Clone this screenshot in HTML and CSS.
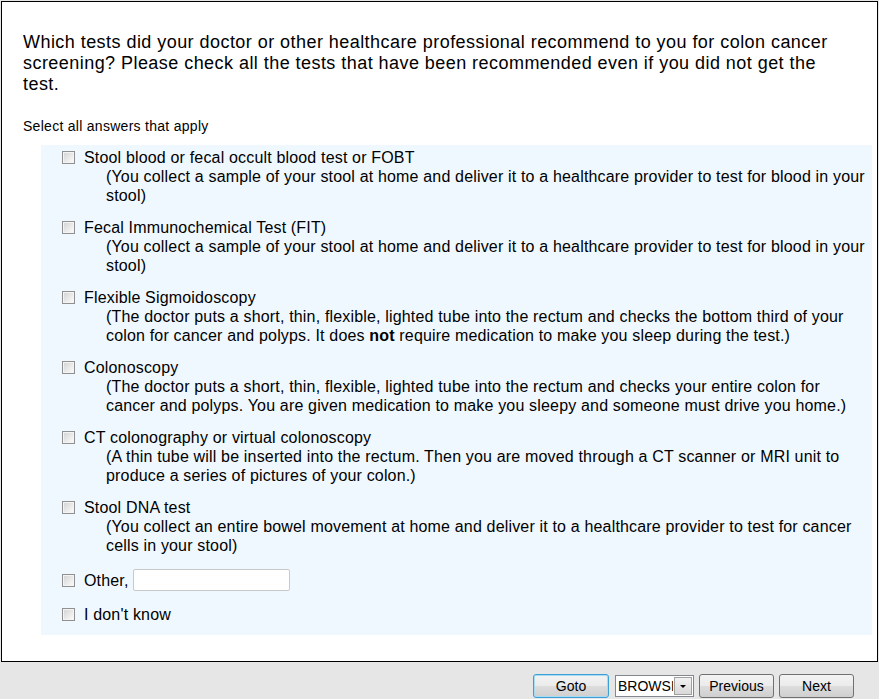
FILE: index.html
```html
<!DOCTYPE html>
<html lang="en">
<head>
    <meta charset="UTF-8">
    <title>Colon Cancer Screening Survey</title>
    <link rel="stylesheet" href="styles.css">
</head>
<body>
    <div class="survey">
        <div class="question">
            Which tests did your doctor or other healthcare professional recommend to you for colon cancer screening? Please check all the tests that have been recommended even if you did not get the test.
        </div>
        <div class="instructions">Select all answers that apply</div>
        <div class="answers">
            <label class="answer">
                <input type="checkbox" class="check">
                <span class="answer-text">
                    <span class="title">Stool blood or fecal occult blood test or FOBT</span>
                    <span class="desc">(You collect a sample of your stool at home and deliver it to a healthcare provider to test for blood in your stool)</span>
                </span>
            </label>
            <label class="answer">
                <input type="checkbox" class="check">
                <span class="answer-text">
                    <span class="title">Fecal Immunochemical Test (FIT)</span>
                    <span class="desc">(You collect a sample of your stool at home and deliver it to a healthcare provider to test for blood in your stool)</span>
                </span>
            </label>
            <label class="answer">
                <input type="checkbox" class="check">
                <span class="answer-text">
                    <span class="title">Flexible Sigmoidoscopy</span>
                    <span class="desc">(The doctor puts a short, thin, flexible, lighted tube into the rectum and checks the bottom third of your colon for cancer and polyps. It does <strong class="emph">not</strong> require medication to make you sleep during the test.)</span>
                </span>
            </label>
            <label class="answer">
                <input type="checkbox" class="check">
                <span class="answer-text">
                    <span class="title">Colonoscopy</span>
                    <span class="desc">(The doctor puts a short, thin, flexible, lighted tube into the rectum and checks your entire colon for cancer and polyps. You are given medication to make you sleepy and someone must drive you home.)</span>
                </span>
            </label>
            <label class="answer">
                <input type="checkbox" class="check">
                <span class="answer-text">
                    <span class="title">CT colonography or virtual colonoscopy</span>
                    <span class="desc">(A thin tube will be inserted into the rectum. Then you are moved through a CT scanner or MRI unit to produce a series of pictures of your colon.)</span>
                </span>
            </label>
            <label class="answer">
                <input type="checkbox" class="check">
                <span class="answer-text">
                    <span class="title">Stool DNA test</span>
                    <span class="desc">(You collect an entire bowel movement at home and deliver it to a healthcare provider to test for cancer cells in your stool)</span>
                </span>
            </label>
            <label class="answer answer-other">
                <input type="checkbox" class="check">
                <span class="title">Other,</span>
                <input type="text" class="other-input">
            </label>
            <label class="answer">
                <input type="checkbox" class="check">
                <span class="title">I don't know</span>
            </label>
        </div>
    </div>

    <div class="nav-bar">
        <button class="nav-button goto">Goto</button>
        <div class="jump">
            <select class="jump-select">
                <option>BROWSE</option>
            </select>
            <span class="jump-arrow"></span>
        </div>
        <button class="nav-button">Previous</button>
        <button class="nav-button">Next</button>
    </div>
</body>
</html>
```

FILE: styles.css
```css
body {
    margin: 0;
    background-color: #e6e6e6;
    font-family: "Liberation Sans", Arial, sans-serif;
    color: #000;
}

.survey {
    margin: 1px 0 0 1px;
    width: 875px;
    height: 659px;
    border: 1px solid #000;
    background-color: #fff;
}

.question {
    padding: 30px 40px 0 21px;
    font-size: 18px;
    line-height: 21px;
    letter-spacing: 0.45px;
}

.instructions {
    margin-top: 23px;
    padding-left: 21px;
    font-size: 14px;
    line-height: 17px;
    letter-spacing: 0.28px;
}

.answers {
    margin: 10px 5px 0 39px;
    padding: 3px 3px 11px 0;
    background-color: #f0f8ff;
}

.answer {
    display: flex;
    align-items: flex-start;
    margin-bottom: 13px;
    font-size: 16px;
    line-height: 19px;
    letter-spacing: 0.17px;
}

.answer:last-child {
    margin-bottom: 0;
}

.check {
    appearance: none;
    flex: none;
    width: 13px;
    height: 13px;
    margin: 3px 9px 0 21px;
    border: 1px solid #909090;
    background: linear-gradient(135deg, #d2d2d2 0%, #f0f0f0 70%, #fff 100%);
    box-shadow: inset 0 0 0 1px #f4f4f4;
}

.answer-text {
    display: flex;
    flex-direction: column;
}

.title {
    display: block;
}

.desc {
    display: block;
    padding-left: 22px;
}

.emph {
    font-weight: bold;
}

.answer-other {
    align-items: center;
    height: 24px;
}

.answer-other .check {
    margin-top: 0;
}

.other-input {
    width: 151px;
    height: 18px;
    margin-left: 4px;
    padding: 1px 2px;
    border: 1px solid #c9c9c9;
    border-radius: 2px;
    font-family: inherit;
    font-size: 14px;
}

.nav-bar {
    display: flex;
    justify-content: flex-end;
    align-items: center;
    gap: 5px;
    padding: 12px 25px 0 0;
}

.nav-button {
    width: 75px;
    height: 24px;
    padding: 0;
    border: 1px solid #707070;
    border-radius: 3px;
    background: linear-gradient(#f3f3f3 0%, #ebebeb 50%, #dddddd 51%, #cfcfcf 100%);
    font-family: inherit;
    font-size: 14px;
    color: #000;
}

.goto {
    width: 76px;
    border-color: #3c9fd5;
    box-shadow: inset 0 0 0 1px #a9dcf3;
    margin-right: 1px;
}

.jump {
    display: flex;
    align-items: stretch;
    width: 77px;
    height: 20px;
    border: 1px solid #828790;
    background-color: #fff;
    overflow: hidden;
}

.jump-select {
    appearance: none;
    flex: 1;
    min-width: 0;
    padding: 0 0 0 2px;
    border: none;
    background: transparent;
    font-family: inherit;
    font-size: 14px;
    color: #000;
}

.jump-arrow {
    flex: none;
    width: 16px;
    margin: 1px;
    border: 1px solid #a0a0a0;
    background: linear-gradient(#f2f2f2, #d8d8d8);
    display: flex;
    align-items: center;
    justify-content: center;
}

.jump-arrow::after {
    content: "";
    border-left: 3px solid transparent;
    border-right: 3px solid transparent;
    border-top: 3px solid #000;
}
```
